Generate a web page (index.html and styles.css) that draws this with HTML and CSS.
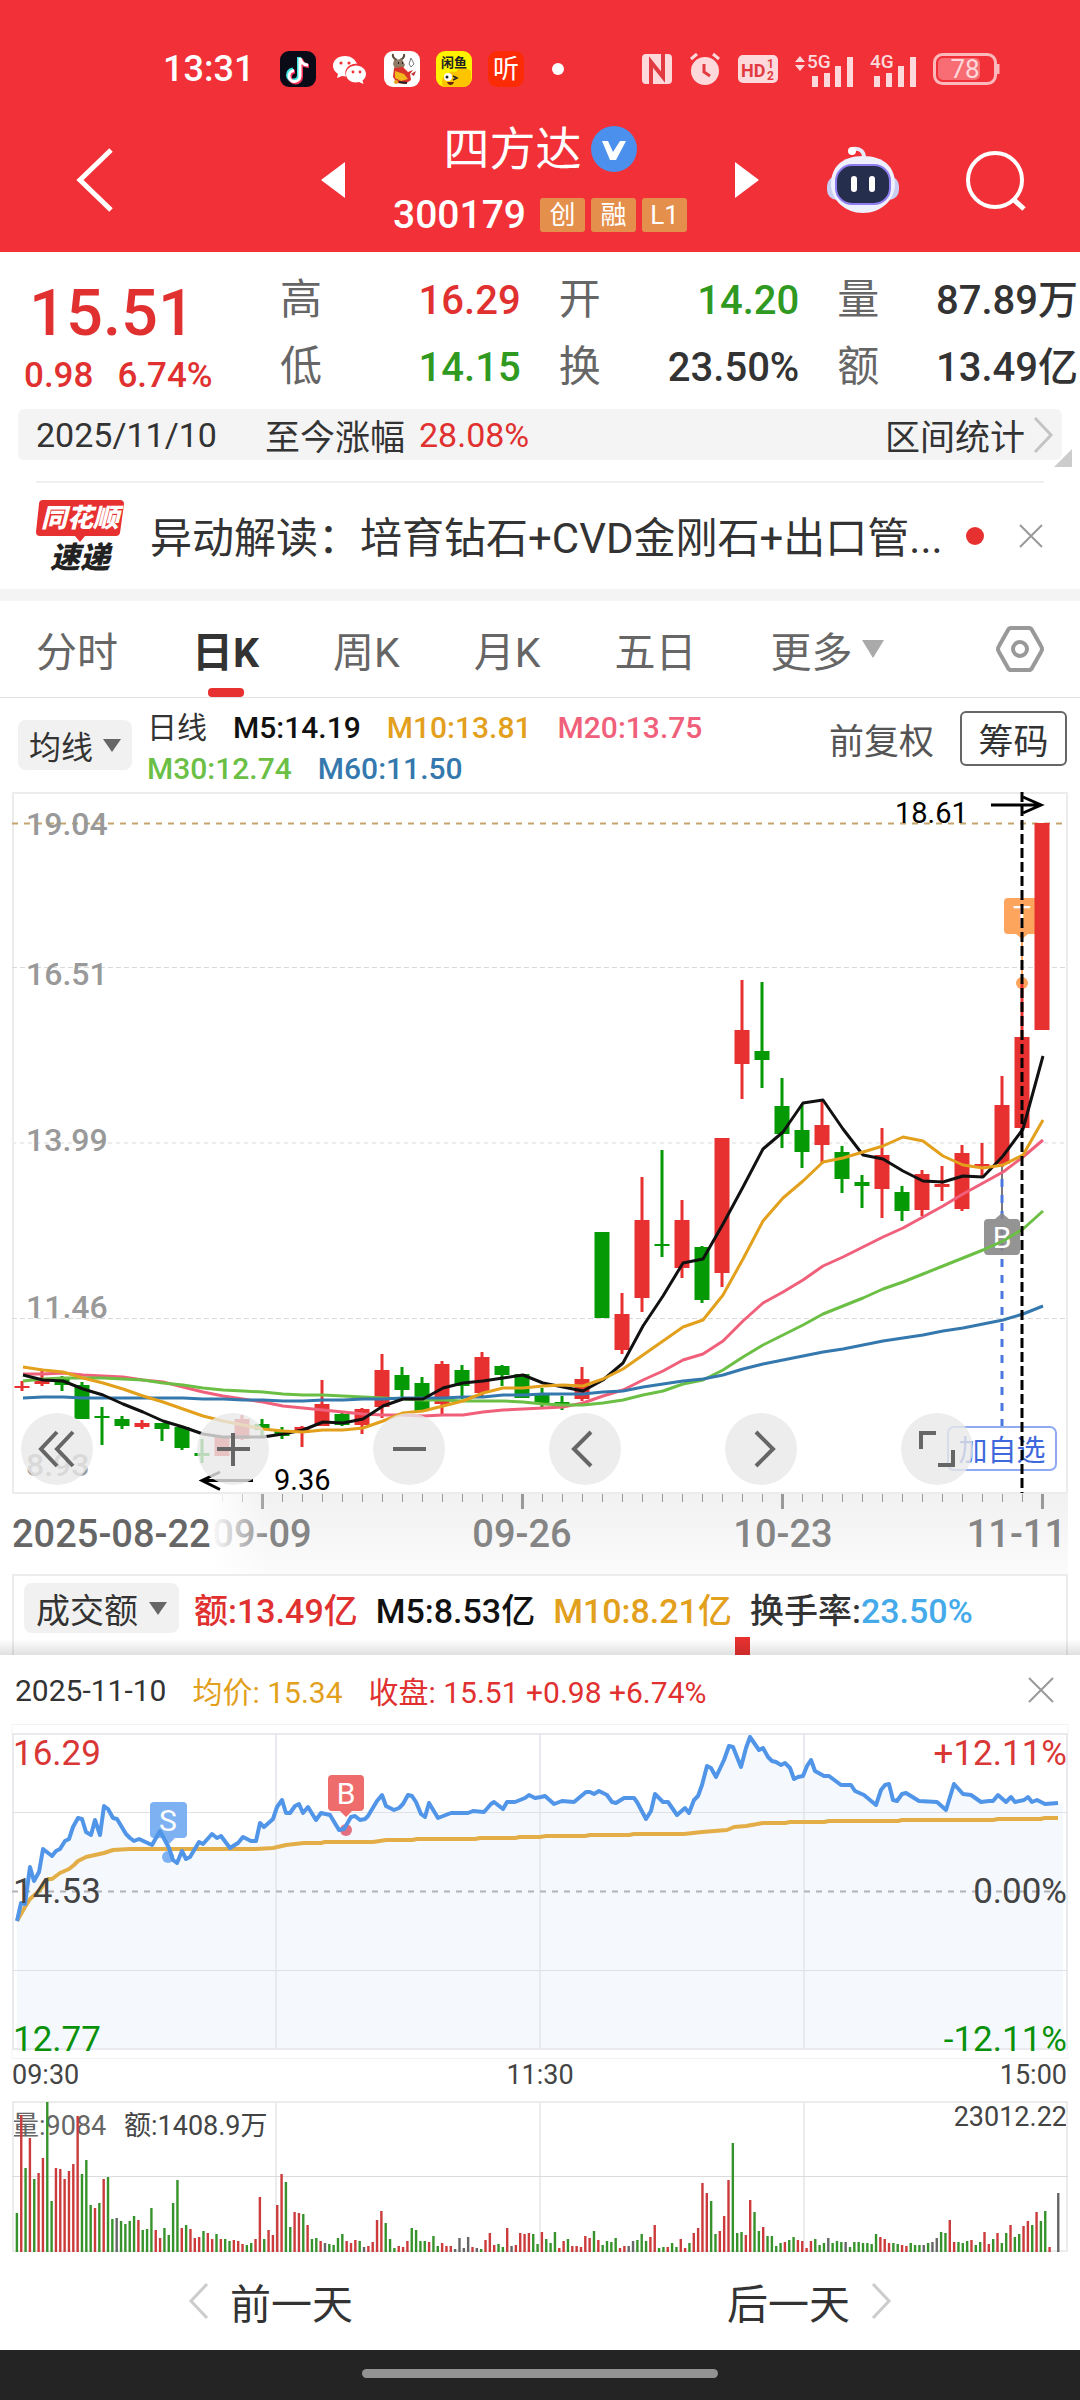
FILE: index.html
```html
<!DOCTYPE html>
<html lang="zh-CN">
<head>
<meta charset="utf-8">
<meta name="viewport" content="width=device-width, initial-scale=1">
<title>四方达 300179</title>
<link rel="stylesheet" href="styles.css">
</head>
<body>
<header class="top">
  <div class="status">
    <time class="clock">13:31</time>
    <div class="apps">
      <svg width="36" height="36" viewBox="0 0 36 36"><rect width="36" height="36" rx="9" fill="#0b0b18"/><g fill="none" stroke-width="4"><path d="M19 6v18a5.500 5.500 0 1 1-6-5.500M19 7c1 5 4 7 8 7" stroke="#3be8e2"/><path d="M21 8v18a5.500 5.500 0 1 1-6-5.500M21 8c1 5 4 7 8 7" stroke="#f5345a"/><path d="M20 7v18a5.500 5.500 0 1 1-6-5.500M20 7c1 5 4 7 8 7" stroke="#fff" stroke-width="3"/></g></svg>
      <svg width="36" height="36" viewBox="0 0 36 36"><path d="M13 5C6 5 1 9 1 15c0 3 2 6 5 8l-1 4 5-2 4 .5C11 17 19 12 25 13 23 8 19 5 13 5z" fill="#fff"/><path d="M24 14.500c-5 0-10 3.500-10 8.500s5 8.500 10 8.500l3-.5 4.500 2-1-3.500c2-1.500 3.500-4 3.500-6.500 0-5-5-8.500-10-8.500z" fill="#fff"/><g fill="#f13038"><circle cx="9" cy="12" r="1.600"/><circle cx="17" cy="12" r="1.600"/><circle cx="21" cy="21" r="1.400"/><circle cx="28" cy="21" r="1.400"/></g></svg>
      <svg width="36" height="36" viewBox="0 0 36 36"><rect width="36" height="36" rx="9" fill="#fff"/><path d="M9 3c-1 4 2 5 4 6M20 3c1 4-2 5-4 6" stroke="#5b4a3c" stroke-width="2" fill="none"/><path d="M10 9l8-1 3 6-3 5-7-1-2-5z" fill="#8f7a66"/><path d="M10 17l9-1 5 5 5-2-3 4 1 6-6 4-8-1-4-6z" fill="#d8322b"/><path d="M11 20l9 3 4 5-7 2-6-3z" fill="#f2b71d"/><path d="M14 12h1M18 12h1M15 31l8 1" stroke="#222" stroke-width="2"/><path d="M25 13l2-6 3 6-3 3z" fill="#fff" stroke="#777"/><circle cx="12" cy="31" r="2" fill="#e3a31b"/><path d="M27 23l5-3-2 5z" fill="#b33"/></svg>
      <svg width="36" height="36" viewBox="0 0 36 36"><rect width="36" height="36" rx="9" fill="#fff200"/><path d="M7 36C3 26 12 19 20 21c3-6 11-5 15-1v8a8 8 0 0 1-8 8z" fill="#ffc400"/><circle cx="12" cy="26" r="4" fill="#fff"/><circle cx="11" cy="26" r="1.500" fill="#222"/><path d="M17 25l4 2-4 2" stroke="#222" fill="none" stroke-width="1.500"/><path d="M11 31h7c-1 4-6 4-7 0z" fill="#6b1f0e"/><text x="18" y="16" class="app-xy">闲鱼</text></svg>
      <svg width="36" height="36" viewBox="0 0 36 36"><rect width="36" height="36" rx="9" fill="#fb2c05"/><text x="18" y="27" class="app-ting">听</text></svg>
    </div>
    <span class="more-dot"></span>
    <div class="signals">
      <svg width="30" height="30" viewBox="0 0 30 30"><rect width="30" height="30" rx="4" fill="#fdd9db"/><path d="M9 30V8l12 15V0" fill="none" stroke="#e23a41" stroke-width="4"/></svg>
      <svg width="32" height="34" viewBox="0 0 32 34"><circle cx="16" cy="19" r="14" fill="#fdd9db"/><path d="M2 7l6-5M30 7l-6-5" stroke="#fdd9db" stroke-width="3"/><path d="M15 12v8l6 4" stroke="#e23a41" stroke-width="3" fill="none"/></svg>
      <svg width="40" height="28" viewBox="0 0 40 28"><rect width="40" height="28" rx="5" fill="#fdd9db"/><text x="3" y="22" class="hd">HD</text><text x="29" y="13" class="hd-n">1</text><text x="29" y="25" class="hd-n">2</text></svg>
      <svg width="58" height="38" viewBox="0 -4 58 38"><path d="M0 8l5-6 5 6zM0 11l5 6 5-6z" fill="#fdd9db"/><text x="12" y="14" class="net">5G</text><path d="M17 22h6v11h-6zM29 19h6v14h-6zM40 12h6v21h-6zM52 3h6v30h-6z" fill="#fdd9db"/></svg>
      <svg width="46" height="38" viewBox="0 -4 46 38"><text x="0" y="14" class="net">4G</text><path d="M4 22h6v11H4zM16 19h6v14h-6zM28 12h6v21h-6zM40 3h6v30h-6z" fill="#fdd9db"/></svg>
      <svg width="67" height="32" viewBox="0 0 67 32"><rect x="1.500" y="1.500" width="61" height="29" rx="8" fill="none" stroke="#fbb9bc" stroke-width="3"/><rect x="5" y="5" width="42" height="22" rx="5" fill="#f76d73"/><path d="M65 11v10" stroke="#fbb9bc" stroke-width="3"/><text x="32" y="25" class="bat">78</text></svg>
    </div>
  </div>
  <div class="title-bar">
    <div class="side side-left">
      <button class="plain" aria-label="返回"><svg width="38" height="66" viewBox="0 0 38 66"><path d="M35 3L4 33l31 30" fill="none" stroke="#fff" stroke-width="5"/></svg></button>
      <button class="plain" aria-label="上一只"><svg width="24" height="36" viewBox="0 0 24 36"><path d="M24 0v36L0 18z" fill="#fff"/></svg></button>
    </div>
    <div class="stock">
      <h1 class="name">四方达<svg width="46" height="46" viewBox="0 0 46 46"><circle cx="23" cy="23" r="23" fill="#4a90ec"/><path d="M11 15h6l5 11 7-11h6L25 34h-6z" fill="#fff"/></svg></h1>
      <div class="code"><span>300179</span><b class="tag">创</b><b class="tag">融</b><b class="tag">L1</b></div>
    </div>
    <div class="side side-right">
      <button class="plain" aria-label="下一只"><svg width="24" height="36" viewBox="0 0 24 36"><path d="M0 0l24 18L0 36z" fill="#fff"/></svg></button>
      <button class="plain" aria-label="智能助手"><svg width="72" height="68" viewBox="0 0 72 68"><path d="M26 3c8-1 11 3 11 9" fill="none" stroke="#e7e9fb" stroke-width="4"/><circle cx="25" cy="5" r="4" fill="#fff"/><rect x="0" y="30" width="72" height="24" rx="10" fill="#c9cdf2"/><path d="M36 10c22 0 32 12 32 28S54 67 36 67 4 54 4 38s10-28 32-28z" fill="#eef0fd"/><rect x="9" y="19" width="54" height="39" rx="16" fill="#262e4e" stroke="#8f7df0" stroke-width="2"/><path d="M27 33v10M45 33v10" stroke="#fff" stroke-width="6" stroke-linecap="round"/></svg></button>
      <button class="plain" aria-label="搜索"><svg width="60" height="62" viewBox="0 0 60 62"><circle cx="29" cy="31" r="27" fill="none" stroke="#fff" stroke-width="4"/><path d="M47 50l11 10" stroke="#fff" stroke-width="5"/></svg></button>
    </div>
  </div>
</header>

<section class="quote">
  <div class="price red">
    <strong>15.51</strong>
    <div class="change"><span>0.98</span><span>6.74%</span></div>
  </div>
  <dl class="stats">
    <div><dt>高</dt><dd class="red">16.29</dd></div>
    <div><dt>开</dt><dd class="green">14.20</dd></div>
    <div><dt>量</dt><dd>87.89万</dd></div>
    <div><dt>低</dt><dd class="green">14.15</dd></div>
    <div><dt>换</dt><dd>23.50%</dd></div>
    <div><dt>额</dt><dd>13.49亿</dd></div>
  </dl>
</section>

<section class="range">
  <span>2025/11/10</span>
  <span class="range-label">至今涨幅</span>
  <span class="red">28.08%</span>
  <a class="range-link" href="#range">区间统计<svg width="20" height="36" viewBox="0 0 20 36"><path d="M1 1l16 17L1 35" fill="none" stroke="#c4c4c4" stroke-width="3"/></svg></a>
  <i class="corner"></i>
</section>

<section class="news">
  <svg class="news-logo" width="88" height="76" viewBox="0 0 88 76"><path d="M7 2h77q4 0 4 4l-4 29q-1 3-4 3H49l-5 6-5-6H4q-4 0-4-4L3 6q0-4 4-4z" fill="#e73030"/><text x="44" y="29" class="logo-a">同花顺</text><text x="44" y="70" class="logo-b">速递</text></svg>
  <a class="news-text" href="#news">异动解读：培育钻石+CVD金刚石+出口管...</a>
  <i class="red-dot"></i>
  <button class="plain" aria-label="关闭消息"><svg width="26" height="24" viewBox="0 0 26 24"><path d="M2 1l22 22M24 1L2 23" stroke="#999" stroke-width="2"/></svg></button>
</section>

<nav class="tabs">
  <button class="tab">分时</button>
  <button class="tab active">日K</button>
  <button class="tab">周K</button>
  <button class="tab">月K</button>
  <button class="tab">五日</button>
  <button class="tab">更多<svg width="22" height="18" viewBox="0 0 22 18"><path d="M0 0h22L11 18z" fill="#aaa"/></svg></button>
  <button class="plain settings" aria-label="设置"><svg width="48" height="46" viewBox="0 0 48 46"><path d="M15 2h18q2 0 3 2l9 16q2 3 0 6l-9 16q-1 2-3 2H15q-2 0-3-2L3 26q-2-3 0-6l9-16q1-2 3-2z" fill="none" stroke="#999" stroke-width="4"/><circle cx="24" cy="23" r="7" fill="none" stroke="#999" stroke-width="4"/></svg></button>
</nav>

<section class="indicator">
  <button class="pick pick-ma">均线<svg width="18" height="13" viewBox="0 0 18 13"><path d="M0 0h18L9 13z" fill="#666"/></svg></button>
  <div class="ma">
    <div><span class="dark">日线</span><span class="black">M5:14.19</span><span class="gold">M10:13.81</span><span class="pink">M20:13.75</span></div>
    <div><span class="lime">M30:12.74</span><span class="blue">M60:11.50</span></div>
  </div>
  <div class="modes"><span>前复权</span><button class="chips">筹码</button></div>
</section>

<section class="kline">
  <svg class="chart" viewBox="0 793 1080 782">
    <defs>
      <linearGradient id="axis" x2="0" y2="1"><stop offset="0" stop-color="#f1f1f1"/><stop offset="1" stop-color="#fbfbfb"/></linearGradient>
      <linearGradient id="fade"><stop offset="0.780" stop-color="#fff"/><stop offset="1" stop-color="#fff" stop-opacity="0"/></linearGradient>
    </defs>
    <rect x="13" y="794" width="1054" height="700" fill="none" stroke="#ececec" stroke-width="2"/>
    <path d="M12 824.500H1066" stroke="#c5a46d" stroke-width="2" stroke-dasharray="6 6"/>
    <path d="M12 968.500H1066M12 1319.500H1066" stroke="#d9d9d9" stroke-dasharray="5 3"/>
    <path d="M12 1144H1066" stroke="#ececec" stroke-width="2" stroke-dasharray="4 4"/>
    <g class="ylab"><text x="26" y="836">19.04</text><text x="26" y="986">16.51</text><text x="26" y="1152">13.99</text><text x="26" y="1319">11.46</text><text x="26" y="1477">8.93</text></g>
    <g class="mark"><text x="895" y="824">18.61</text><text x="274" y="1491">9.36</text></g>
    <path d="M991 806h49M1023 798l18 8-18 8" fill="none" stroke="#000" stroke-width="3"/>
    <path d="M253 1481.500h-50M220 1473l-18 8.500 18 9" fill="none" stroke="#000" stroke-width="3"/>
    <path d="M1008 899h28q4 0 4 4v28q0 4-4 4h-8l-6 5-6-5h-8q-4 0-4-4v-28q0-4 4-4z" fill="#fda55c"/>
    <text x="1022" y="928" class="badge">T</text>
    <path d="M1022 940v44" stroke="#fda55c" stroke-width="2"/>
    <circle cx="1022" cy="984" r="6" fill="#fda55c"/>
    <path d="M1002 1165v50" stroke="#777" stroke-width="2"/>
    <path d="M1002 1180V1428" stroke="#4a76dd" stroke-width="3" stroke-dasharray="8 8"/>
    <path d="M988 1220h7l7-6 7 6h7q4 0 4 4v28q0 4-4 4h-28q-4 0-4-4v-28q0-4 4-4z" fill="#888" fill-opacity=".9"/>
    <text x="1002" y="1249" class="badge">B</text>
    <g id="candles"></g>
    <g id="averages" fill="none" stroke-width="3" stroke-linejoin="round"></g>
    <rect x="948" y="1428" width="108" height="43" rx="6" fill="#fff" stroke="#8fa9f3" stroke-width="2"/>
    <text x="1002" y="1462" class="pick-text">加自选</text>
    <path d="M1022 793V1494" stroke="#000" stroke-width="3" stroke-dasharray="10 4"/>
    <rect x="12" y="1495" width="1056" height="80" fill="url(#axis)"/>
    <g id="ticks" stroke="#999"></g>
    <g class="xlab"><text x="262" y="1548" text-anchor="middle">09-09</text><text x="522" y="1548" text-anchor="middle">09-26</text><text x="783" y="1548" text-anchor="middle">10-23</text><text x="1066" y="1548" text-anchor="end">11-11</text></g>
    <rect x="0" y="1495" width="270" height="80" fill="url(#fade)"/>
    <text x="12" y="1548" class="xlab first">2025-08-22</text>
  </svg>
  <div class="tools">
    <button aria-label="最早"><svg width="36" height="36" viewBox="0 0 36 36"><path d="M18 1L2 18l16 17M34 1L18 18l16 17"/></svg></button>
    <button aria-label="放大"><svg width="36" height="36" viewBox="0 0 36 36"><path d="M2 18h33M18 2v33"/></svg></button>
    <button aria-label="缩小"><svg width="36" height="36" viewBox="0 0 36 36"><path d="M2 18h33"/></svg></button>
    <button aria-label="左移"><svg width="36" height="36" viewBox="0 0 36 36"><path d="M24 1L7 18l17 17"/></svg></button>
    <button aria-label="右移"><svg width="36" height="36" viewBox="0 0 36 36"><path d="M13 1l17 17-17 17"/></svg></button>
    <button aria-label="全屏"><svg width="36" height="36" viewBox="0 0 36 36"><path d="M2 18V2h15M34 19v15H19"/></svg></button>
  </div>
</section>

<section class="turnover">
  <button class="pick">成交额<svg width="18" height="13" viewBox="0 0 18 13"><path d="M0 0h18L9 13z" fill="#666"/></svg></button>
  <span class="red">额:13.49亿</span><span class="black">M5:8.53亿</span><span class="gold">M10:8.21亿</span><span class="dark">换手率:<span class="sky">23.50%</span></span>
  <i class="peek"></i>
</section>

<section class="day">
  <div class="day-head">
    <span class="dark">2025-11-10</span><span class="gold">均价: 15.34</span><span class="red">收盘: 15.51 +0.98 +6.74%</span>
    <button class="plain" aria-label="关闭"><svg width="26" height="26" viewBox="0 0 26 26"><path d="M1 1l24 24M25 1L1 25" stroke="#999" stroke-width="2"/></svg></button>
  </div>
  <svg class="chart" viewBox="0 1722 1080 534">
    <path d="M12 1735v-9.500H1068v9.500M12 2051v8.500H1068v-8.500" fill="none" stroke="#f3f3f3"/>
    <path id="area" fill="#f5f9fe"/>
    <path d="M12 1735H1068M12 2050H1068M13 1734V2051M276 1734V2051M540 1734V2051M804 1734V2051M1067 1734V2051" stroke="#e8eaed" stroke-width="2"/>
    <path d="M12 1813.500H1068M12 1971.500H1068" stroke="#dfe1e5"/>
    <path d="M12 1892.500H1066" stroke="#b0b3b8" stroke-width="2" stroke-dasharray="6 6"/>
    <path d="M154 1803h29q4 0 4 4v28q0 4-4 4h-8l-6 6-6-6h-9q-4 0-4-4v-28q0-4 4-4z" fill="#7db1f1"/>
    <circle cx="168" cy="1858" r="6" fill="#7db1f1"/>
    <path d="M332 1776h28q4 0 4 4v28q0 4-4 4h-8l-6 6-6-6h-8q-4 0-4-4v-28q0-4 4-4z" fill="#ef6c6c"/>
    <circle cx="346" cy="1831" r="6" fill="#e27080"/>
    <polyline id="avg" fill="none" stroke="#e3ae48" stroke-width="4" stroke-linejoin="round"/>
    <polyline id="now" fill="none" stroke="#5195e8" stroke-width="4" stroke-linejoin="round"/>
    <text x="168" y="1832" class="badge">S</text><text x="346" y="1805" class="badge">B</text>
    <g class="lab"><text x="13" y="1766" class="f-red">16.29</text><text x="13" y="1904">14.53</text><text x="13" y="2052" class="f-green">12.77</text></g>
    <g class="lab end"><text x="1067" y="1766" class="f-red">+12.11%</text><text x="1067" y="1904">0.00%</text><text x="1067" y="2052" class="f-green">-12.11%</text></g>
    <g class="small"><text x="12" y="2085">09:30</text><text x="540" y="2085" text-anchor="middle">11:30</text><text x="1067" y="2085" text-anchor="end">15:00</text>
    <text x="12" y="2136" class="f-mid">量:9084</text><text x="124" y="2136">额:1408.9万</text><text x="1067" y="2127" text-anchor="end">23012.22</text></g>
    <path d="M12 2103H1068M13 2102V2252M276 2102V2252M540 2102V2252M804 2102V2252M1067 2102V2252M12 2252H1068" stroke="#ececec" stroke-width="2"/>
    <path d="M12 2177.500H1068" stroke="#dcdcdc"/>
    <g id="volume"></g>
  </svg>
  <div class="day-nav">
    <button><svg width="20" height="36" viewBox="0 0 20 36"><path d="M18 1L2 18l16 17" fill="none" stroke="#ccc" stroke-width="3"/></svg>前一天</button>
    <button>后一天<svg width="20" height="36" viewBox="0 0 20 36"><path d="M2 1l16 17L2 35" fill="none" stroke="#ccc" stroke-width="3"/></svg></button>
  </div>
</section>

<footer class="home"><i></i></footer>
<script src="charts.js"></script>
</body>
</html>
```

FILE: charts.js
```js
const NS = 'http://www.w3.org/2000/svg';
const RED = '#e73030', GREEN = '#059a05';

function add(parent, name, attrs) {
  const el = document.createElementNS(NS, name);
  for (const k in attrs) el.setAttribute(k, attrs[k]);
  document.getElementById(parent).appendChild(el);
}

// colour, wick top, wick bottom, body top, body bottom
const candles = `r1382,1392,1387,1389 r1372,1387,1382,1385 g1377,1392,1380,1386 g1383,1420,1386,1420 g1408,1446,1417,1419
g1417,1430,1420,1427 r1421,1430,1424,1428 g1424,1442,1424,1430 g1427,1451,1428,1449 g1440,1464,1454,1457
r1438,1457,1438,1457 r1416,1441,1420,1440 g1420,1437,1425,1431 g1428,1440,1431,1437 r1427,1448,1428,1434
r1381,1427,1405,1427 g1412,1427,1415,1426 r1409,1435,1410,1426 r1355,1419,1371,1408 g1368,1399,1376,1391
g1378,1412,1384,1412 r1362,1415,1365,1405 g1366,1400,1371,1387 r1353,1399,1358,1394 g1366,1387,1367,1376
g1375,1399,1375,1399 g1389,1408,1394,1405 g1397,1411,1403,1405 r1368,1402,1380,1400 g1233,1319,1233,1319
r1294,1355,1315,1351 r1178,1313,1221,1299 g1151,1258,1245,1247 r1201,1279,1221,1269 g1247,1304,1248,1301
r1139,1288,1139,1274 r981,1100,1031,1065 g983,1089,1052,1061 g1079,1149,1107,1135 g1105,1169,1131,1153
r1101,1165,1126,1146 g1147,1194,1153,1180 g1176,1209,1183,1187 r1129,1219,1156,1190 g1187,1222,1193,1212
r1171,1217,1175,1211 r1167,1202,1185,1188 r1146,1212,1154,1210 r1144,1177,1165,1167 r1077,1168,1106,1165
r984,1129,1038,1129 r824,1031,824,1031`.split(/\s+/);

candles.forEach((c, i) => {
  const fill = c[0] === 'r' ? RED : GREEN;
  const [hi, lo, top, bot] = c.slice(1).split(',').map(Number);
  const x = 22 + 20 * i;
  add('candles', 'rect', { x: x - 1.5, y: hi, width: 3, height: lo - hi, fill });
  add('candles', 'rect', { x: x - 7.5, y: top, width: 15, height: bot - top, fill });
});

const averages = {
  '#f0607a': [1375,1375,1374,1376,1377,1378,1381,1383,1388,1393,1397,1400,1403,1407,1409,1411,1413,1415,1416,1416,1417,1416,1416,1413,1411,1410,1409,1408,1404,1397,1391,1381,1372,1361,1355,1342,1322,1304,1293,1281,1267,1258,1248,1238,1229,1218,1207,1195,1184,1173,1158,1141],
  '#6cbf45': [1382,1380,1379,1379,1379,1380,1381,1384,1386,1389,1391,1392,1393,1395,1396,1396,1397,1398,1399,1400,1401,1401,1402,1402,1402,1403,1405,1406,1406,1404,1401,1396,1392,1385,1381,1371,1358,1346,1336,1326,1315,1307,1299,1290,1283,1275,1267,1259,1251,1242,1230,1212],
  '#3478ae': [1399,1398,1398,1399,1399,1399,1399,1399,1399,1400,1400,1401,1401,1402,1402,1401,1401,1400,1400,1399,1399,1399,1398,1398,1396,1396,1395,1395,1395,1393,1392,1388,1385,1382,1380,1376,1370,1365,1361,1357,1353,1350,1346,1342,1339,1336,1332,1329,1325,1321,1315,1307],
  '#111111': [1376,1381,1382,1390,1396,1405,1413,1422,1428,1435,1438,1438,1438,1435,1431,1423,1424,1420,1407,1400,1400,1389,1384,1382,1379,1376,1384,1388,1392,1381,1364,1327,1297,1264,1260,1225,1188,1150,1133,1104,1101,1130,1156,1160,1172,1182,1183,1177,1178,1157,1130,1057],
  '#e2a01c': [1368,1371,1373,1379,1384,1390,1397,1403,1410,1417,1422,1426,1430,1432,1433,1431,1431,1429,1422,1414,1412,1407,1402,1394,1389,1389,1387,1386,1387,1380,1370,1356,1342,1328,1321,1296,1260,1222,1199,1182,1163,1159,1153,1147,1138,1142,1157,1166,1169,1166,1156,1121]
};
for (const stroke in averages) {
  add('averages', 'polyline', { stroke, points: averages[stroke].map((y, i) => (23 + 20 * i) + ',' + y).join(' ') });
}

for (let i = 0; i <= 41; i++) {
  const major = i === 2 || i === 15 || i === 28 || i === 41;
  add('ticks', 'path', { d: `M${222 + 20 * i + 0.5} 1495v${major ? 15 : 8}`, 'stroke-width': major ? 3 : 1 });
}

const now = '17,1922 21,1904 25,1905 30,1868 34,1882 39,1873 43,1850 52,1857 56,1852 60,1850 65,1842 69,1840 73,1828 78,1819 82,1820 86,1833 91,1836 95,1821 100,1836 104,1807 108,1810 113,1819 117,1820 126,1835 130,1839 134,1842 139,1840 152,1846 160,1832 169,1849 173,1861 177,1864 182,1852 186,1860 190,1858 199,1843 203,1845 212,1835 217,1839 221,1837 230,1849 238,1844 243,1838 251,1842 256,1842 260,1824 264,1828 273,1820 277,1808 282,1801 286,1814 290,1814 295,1807 299,1805 303,1814 308,1808 316,1821 321,1814 330,1816 339,1831 344,1830 351,1818 355,1817 360,1821 365,1820 368,1817 377,1802 382,1796 386,1807 394,1811 399,1809 403,1805 408,1796 412,1797 416,1803 421,1815 425,1818 429,1804 438,1819 451,1814 468,1814 473,1812 484,1813 491,1805 494,1803 503,1810 507,1803 515,1803 525,1799 529,1796 535,1799 541,1798 545,1797 554,1805 562,1802 574,1803 586,1793 590,1793 594,1795 599,1792 607,1796 612,1803 616,1804 624,1799 634,1799 637,1803 646,1820 651,1812 655,1795 663,1803 668,1803 677,1816 685,1809 689,1814 694,1801 698,1797 702,1786 707,1767 711,1769 716,1778 724,1761 729,1747 733,1748 741,1768 746,1749 750,1738 759,1751 763,1749 768,1758 772,1762 776,1763 781,1766 785,1764 790,1769 794,1780 798,1778 803,1777 807,1767 811,1761 815,1772 824,1777 829,1777 841,1786 851,1786 855,1792 864,1796 876,1806 881,1791 885,1786 889,1785 893,1801 897,1802 902,1795 906,1794 919,1802 937,1803 946,1811 954,1785 963,1795 971,1796 981,1803 989,1802 993,1802 998,1796 1006,1803 1011,1798 1015,1803 1024,1801 1028,1798 1032,1803 1037,1801 1045,1805 1058,1804';
const avg = '17,1922 25,1908 30,1900 39,1892 48,1880 52,1880 60,1874 69,1870 74,1866 78,1862 86,1858 95,1856 104,1854 113,1851 130,1850 256,1850 273,1849 286,1846 304,1844 321,1844 325,1843 373,1843 386,1841 412,1841 417,1840 475,1840 480,1839 515,1839 520,1838 540,1838 546,1837 585,1837 590,1836 629,1836 634,1835 684,1835 702,1833 727,1831 734,1828 746,1827 763,1824 785,1824 790,1823 824,1823 829,1822 898,1822 902,1821 993,1821 998,1820 1040,1820 1045,1819 1058,1819';
document.getElementById('now').setAttribute('points', now);
document.getElementById('avg').setAttribute('points', avg);
document.getElementById('area').setAttribute('d', 'M17,2050 L' + now + ' 1063,1804 1063,2050Z');

// one bar per minute: colour and height, "-" for no trade
const volume = `g39 r137 g84 r114 g73 r79 r94 g150 g51 r84 r83 r73 r81 r88 r136 g78 g92 g47 r44 g49 r73 g75 g33 k34 g31 g28 g31 g36 r32 g22 g23 g44 r22 r14 g24 g17 g49 g72 r24 g27
r23 r14 r15 g21 r19 r13 g18 r13 g13 g11 r12 r11 r8 g7 g9 r13 r55 g13 r22 r17 r47 r78 g70 g25 r40 r39 g38 r27 g13 g14 r11 k9 g8 g7 g14 g18 r11 r9 r12 g11
k5 r6 r10 r32 r41 g29 g13 g4 r6 r5 r11 g24 g22 g11 g11 r10 g16 g6 r9 r6 r6 k3 k14 k4 k15 r5 k4 g3 r12 r19 r7 g8 g5 r24 k6 r7 r19 r18 r19 g18
g8 r20 g13 g9 g20 r4 r11 g13 r6 r6 r5 r16 r14 g21 r12 g7 g11 g10 g14 r4 r6 k6 k11 g12 g18 g11 r15 r27 g4 g5 r5 g9 g5 r13 r4 g9 r19 r24 r69 r59
g51 g18 r21 r36 r72 g109 g19 g20 r17 r52 g40 g21 r25 g16 g16 g6 g9 r10 g12 g15 r12 r11 r4 r11 g13 g7 g9 k14 g9 g11 g10 k10 g5 g10 g10 g9 g9 g8 g18 r15
r13 r9 g9 g8 r7 r6 g9 g7 g7 k7 g9 k10 k14 g20 g19 r32 r10 g10 g9 g11 r12 g7 g10 r20 r8 g13 r19 g9 g19 r27 g15 g18 r26 r31 g27 r40 g31 g41 r5 - k59`.split(/\s+/);
const tone = { r: '#cc3b3b', g: '#36932b', k: '#666' };
volume.forEach((v, i) => {
  if (v === '-') return;
  const h = +v.slice(1);
  add('volume', 'rect', { x: 15.7 + 4.339 * i, y: 2253 - h, width: 2.4, height: h, fill: tone[v[0]] });
});
```

FILE: styles.css
```css
* { box-sizing: border-box; }
body {
  margin: 0;
  min-height: 100vh;
  display: flex;
  flex-direction: column;
  background: #fff;
  color: #333;
  font-family: Roboto, "Noto Sans CJK SC", sans-serif;
}
button {
  font: inherit;
  color: inherit;
  border: 0;
  padding: 0;
  background: none;
  white-space: nowrap;
}
a { color: inherit; text-decoration: none; }
svg { display: block; flex: none; overflow: visible; }
i { font-style: normal; }
.plain { display: block; }

.red { color: #e03030; }
.green { color: #2f9a1f; }
.dark { color: #333; }
.black { color: #111; }
.gold { color: #e2a01c; }
.pink { color: #f0607a; }
.lime { color: #6cbf45; }
.blue { color: #3478ae; }
.sky { color: #45aaea; }

/* header */
.top { background: #f13038; color: #fff; height: 252px; }
.status {
  display: flex;
  align-items: center;
  height: 120px;
  padding: 18px 80px 0 163px;
}
.clock { width: 117px; font-size: 36px; font-weight: 500; }
.apps { display: flex; gap: 16px; }
.more-dot { width: 12px; height: 12px; margin-left: 28px; border-radius: 50%; background: #fff; }
.signals { display: flex; align-items: center; gap: 17px; margin-left: auto; }
.app-xy { font-size: 13px; font-weight: 700; text-anchor: middle; fill: #222; }
.app-ting { font-size: 26px; text-anchor: middle; fill: #fff; }
.hd { font-size: 18px; font-weight: 700; fill: #e23a41; }
.hd-n { font-size: 12px; font-weight: 700; fill: #e23a41; }
.net { font-size: 19px; font-weight: 500; fill: #fdd9db; }
.bat { font-size: 26px; fill: #fdd9db; text-anchor: middle; }

.title-bar { display: grid; grid-template-columns: 1fr 300px 1fr; height: 116px; }
.side { display: flex; align-items: center; justify-content: space-between; }
.side-left { padding: 0 45px 0 76px; }
.side-right { padding: 0 54px 0 45px; }
.stock { display: flex; flex-direction: column; align-items: center; gap: 12px; }
.name {
  display: flex;
  align-items: center;
  gap: 9px;
  margin: 0;
  font-size: 46px;
  line-height: 58px;
  font-weight: 400;
}
.code { display: flex; align-items: center; gap: 6px; height: 50px; font-size: 39px; font-weight: 500; }
.code span { margin-right: 8px; }
.tag {
  width: 45px;
  height: 34px;
  border-radius: 3px;
  background: #e48f4c;
  font-size: 26px;
  line-height: 34px;
  font-weight: 400;
  text-align: center;
}

/* quote */
.quote { display: flex; padding: 19px 2px 12px 24px; }
.price { width: 256px; font-weight: 500; }
.price strong { display: block; padding-left: 5px; font-size: 65px; line-height: 84px; font-weight: 500; }
.change { display: flex; gap: 24px; font-size: 35px; line-height: 42px; }
.stats { flex: 1; display: grid; grid-template-columns: repeat(3, 1fr); align-content: start; gap: 8px 38px; margin: 0; }
.stats div { display: flex; align-items: baseline; justify-content: space-between; font-size: 42px; line-height: 58px; }
.stats dt { color: #666; }
.stats dd { margin: 0; font-weight: 500; font-size: 40px; }

.range {
  position: relative;
  display: flex;
  align-items: center;
  height: 51px;
  margin: 0 18px 21px;
  padding: 0 8px 0 18px;
  border-radius: 6px;
  background: #f4f4f4;
  font-size: 34px;
}
.range-label { margin: 0 14px 0 48px; font-size: 35px; }
.range-link { display: flex; align-items: center; gap: 9px; margin-left: auto; font-size: 35px; }
.corner {
  position: absolute;
  right: -10px;
  bottom: -7px;
  border-left: 18px solid transparent;
  border-bottom: 18px solid #ccc;
}

.news {
  display: flex;
  align-items: center;
  height: 108px;
  margin: 0 36px;
  border-top: 2px solid #efefef;
}
.news-text { flex: 1; margin-left: 26px; padding-bottom: 3px; font-size: 42px; white-space: nowrap; overflow: hidden; }
.red-dot { width: 18px; height: 18px; margin-right: 34px; border-radius: 50%; background: #e73030; }
.logo-a { font-size: 26px; font-weight: 900; font-style: italic; fill: #fff; text-anchor: middle; }
.logo-b { font-size: 30px; font-weight: 900; font-style: italic; fill: #222; text-anchor: middle; }

/* tabs */
.tabs {
  display: flex;
  align-items: stretch;
  gap: 74px;
  height: 109px;
  padding: 0 36px;
  border-top: 12px solid #f4f4f4;
  border-bottom: 1px solid #e2e2e2;
  font-size: 41px;
  color: #666;
}
.tab { position: relative; display: flex; align-items: center; gap: 9px; }
.active { color: #333; font-weight: 700; }
.active::after {
  content: "";
  position: absolute;
  bottom: 0;
  left: 50%;
  width: 36px;
  height: 9px;
  margin-left: -18px;
  border-radius: 4px;
  background: #e73030;
}
.settings { margin-left: auto; }

/* indicator row */
.indicator { display: flex; align-items: center; height: 94px; padding: 0 13px 0 18px; }
.pick {
  display: flex;
  align-items: center;
  gap: 11px;
  height: 50px;
  padding: 0 12px;
  border-radius: 8px;
  background: #f1f1f1;
  color: #333;
  font-size: 34px;
}
.pick-ma { padding: 0 11px; gap: 10px; font-size: 32px; }
.ma { margin-left: 15px; padding-top: 6px; font-size: 30px; line-height: 41px; font-weight: 500; }
.ma div { display: flex; gap: 26px; }
.ma .dark { font-weight: 400; }
.modes { display: flex; align-items: center; gap: 26px; margin-left: auto; padding-bottom: 14px; font-size: 35px; color: #555; }
.chips { width: 107px; height: 55px; border: 2px solid #666; border-radius: 6px; color: #333; }

/* candlestick chart */
.chart { width: 100%; height: auto; }
.kline { position: relative; }
.ylab { font-size: 32px; font-weight: 500; fill: #999; }
.mark { font-size: 29px; fill: #000; }
.badge { font-size: 30px; fill: #fff; text-anchor: middle; }
.pick-text { font-size: 29px; fill: #3f68dc; text-anchor: middle; }
.xlab { font-size: 38px; font-weight: 500; fill: #858585; }
.first { fill: #666; }
.tools {
  position: absolute;
  left: 21px;
  right: 107px;
  bottom: 89px;
  display: flex;
  justify-content: space-between;
}
.tools button {
  display: grid;
  place-items: center;
  width: 72px;
  height: 72px;
  border-radius: 50%;
  background: rgba(232, 232, 232, 0.8);
}
.tools path { fill: none; stroke: #666; stroke-width: 4; }

.turnover {
  position: relative;
  display: flex;
  align-items: center;
  gap: 18px;
  height: 81px;
  margin: 0 12px;
  padding: 0 10px 15px;
  border: 2px solid #ececec;
  border-bottom: 0;
  font-size: 34px;
  font-weight: 500;
  white-space: nowrap;
}
.turnover .pick { margin-right: -3px; font-weight: 400; }
.turnover::after {
  content: "";
  position: absolute;
  left: -14px;
  right: -14px;
  bottom: 0;
  height: 16px;
  background: linear-gradient(rgba(0, 0, 0, 0), rgba(0, 0, 0, 0.12));
}
.peek { position: absolute; left: 68.5%; bottom: 0; width: 15px; height: 18px; background: #e73030; }

/* intraday sheet */
.day-head { display: flex; align-items: center; gap: 26px; height: 66px; padding: 4px 26px 0 15px; font-size: 30px; }
.day-head button { margin-left: auto; }
.lab { font-size: 35px; fill: #444; }
.end { text-anchor: end; }
.small { font-size: 27px; fill: #444; }
.f-red { fill: #d93636; }
.f-green { fill: #0a910a; }
.f-mid { fill: #666; }
.day-nav { display: grid; grid-template-columns: 1fr 1fr; height: 95px; padding: 0 2px 3px; font-size: 41px; color: #333; }
.day-nav button { display: flex; align-items: center; justify-content: center; gap: 21px; }

.home { flex: 1; display: flex; justify-content: center; min-height: 48px; padding-top: 19px; background: #242424; }
.home i { width: 33%; height: 9px; border-radius: 5px; background: #929292; }
```
